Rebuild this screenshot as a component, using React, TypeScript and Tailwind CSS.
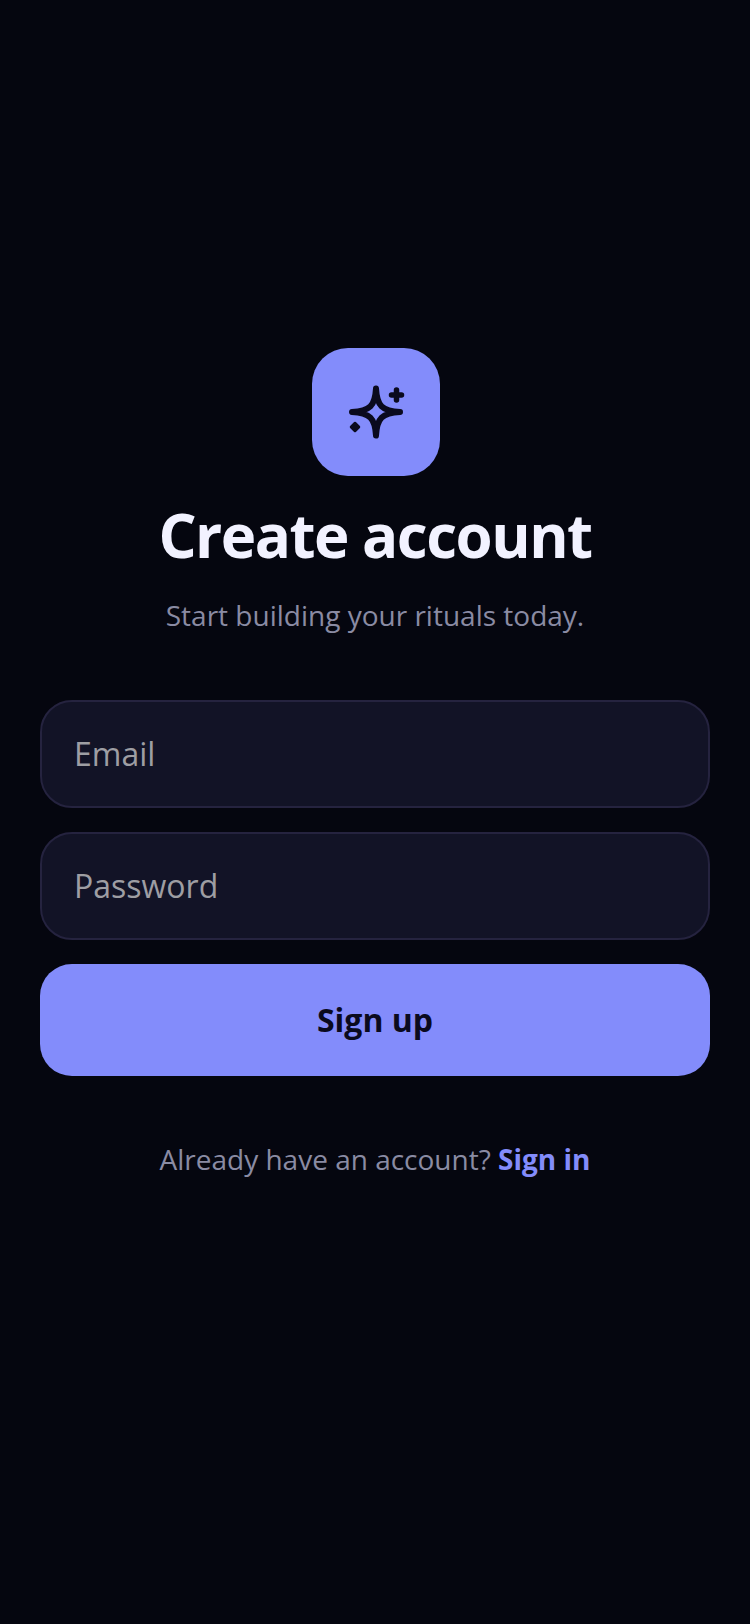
function SparkleIcon() {
  return (
    <svg width="72" height="72" viewBox="0 0 72 72" fill="none" stroke="#0a0a1e" strokeLinecap="round" strokeLinejoin="round">
      <path
        d="M36 12.5 C37 30 42 35 60 36 C42 37 37 42 36 59.5 C35 42 30 37 12 36 C30 35 35 30 36 12.5 Z"
        strokeWidth="6"
      />
      <path d="M56.5 14 V24 M51.5 19 H61.5" strokeWidth="5.5" />
      <path d="M15 47 L19 51 L15 55 L11 51 Z" fill="#0a0a1e" strokeWidth="2.5" />
    </svg>
  );
}

function Field({ label, type }: { label: string; type: string }) {
  return (
    <input
      type={type}
      placeholder={label}
      aria-label={label}
      className="h-[108px] w-full rounded-[32px] border-2 border-[#25233f] bg-[#121326] px-8 pb-[2px] text-[32px] text-white outline-none placeholder:text-[#9e9ea3]"
    />
  );
}

export default function App() {
  return (
    <div className="flex min-h-[1624px] flex-col items-center bg-[#05060f] px-10 pt-[348px] font-['Open_Sans',sans-serif]">
      <div className="ml-[2px] flex h-32 w-32 items-center justify-center rounded-[36px] bg-[#838cfb]">
        <SparkleIcon />
      </div>
      <h1 className="mt-[17px] text-[60px] leading-[84px] font-bold tracking-[-1.5px] text-[#f2f2ff]">Create account</h1>
      <p className="mt-[18px] text-[28px] leading-10 text-[#8a8ba3]">Start building your rituals today.</p>
      <div className="mt-[65px] flex w-full flex-col gap-6">
        <Field label="Email" type="email" />
        <Field label="Password" type="password" />
        <button className="h-28 w-full rounded-[32px] bg-[#838cfb] text-[32px] font-bold text-[#0a0a1e]">Sign up</button>
      </div>
      <p className="mt-[63px] text-[28px] leading-10 text-[#8a8ba3]">
        Already have an account? <a className="font-bold text-[#838cfb]">Sign in</a>
      </p>
    </div>
  );
}
